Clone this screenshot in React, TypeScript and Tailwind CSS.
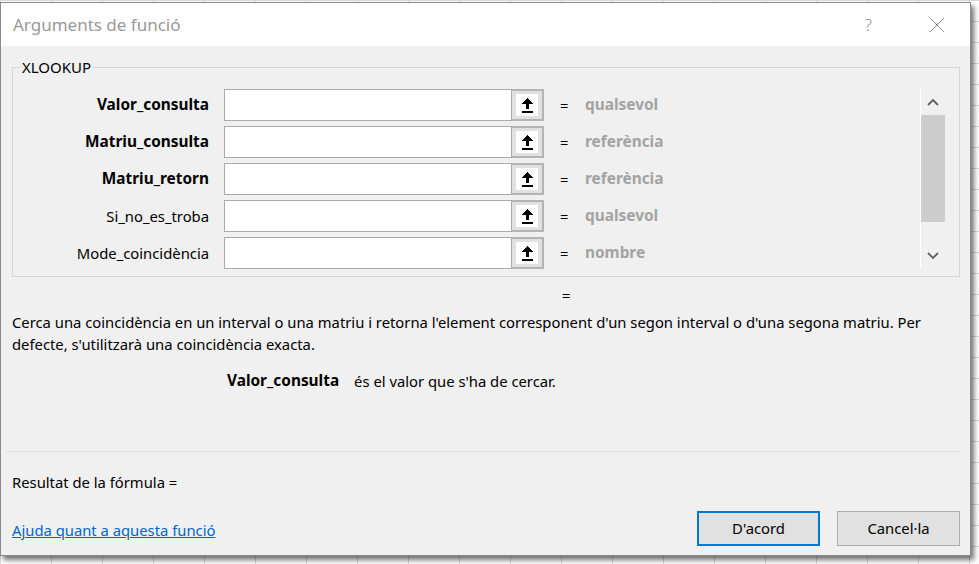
import React from "react";

type Arg = { name: string; bold: boolean; value: string };

const args: Arg[] = [
  { name: "Valor_consulta", bold: true, value: "qualsevol" },
  { name: "Matriu_consulta", bold: true, value: "referència" },
  { name: "Matriu_retorn", bold: true, value: "referència" },
  { name: "Si_no_es_troba", bold: false, value: "qualsevol" },
  { name: "Mode_coincidència", bold: false, value: "nombre" },
];

function RefArrow() {
  return (
    <svg width="11" height="15" viewBox="0 0 11 15" shapeRendering="crispEdges">
      <polygon points="5.5,0 0,6 11,6" fill="#000" />
      <rect x="4" y="6" width="3" height="5" fill="#000" />
      <rect x="0" y="13" width="11" height="1.5" fill="#000" />
    </svg>
  );
}

function Chevron({ up }: { up: boolean }) {
  return (
    <svg width="12" height="8" viewBox="0 0 12 8">
      <polyline
        points={up ? "1,7 6,2 11,7" : "1,1 6,6 11,1"}
        fill="none"
        stroke="#606060"
        strokeWidth="1.8"
      />
    </svg>
  );
}

function ArgRow({ arg }: { arg: Arg }) {
  return (
    <div className="flex h-[32px] items-center">
      <div
        className={`w-[196px] text-right text-black ${arg.bold ? "text-[15.4px] font-bold" : "text-[14.8px]"}`}
      >
        {arg.name}
      </div>
      <div className="ml-[15px] h-[32px] w-[288px] border border-[#ababab] bg-white" />
      <div className="flex h-[32px] w-[32px] items-center justify-center border-2 border-l-0 border-[#b4b4b4] bg-[#e1e1e1]">
        <div className="flex h-[22px] w-[22px] items-center justify-center bg-white">
          <RefArrow />
        </div>
      </div>
      <div className="ml-[16px] w-[9px] text-[14.8px] text-black">=</div>
      <div className="ml-[16px] text-[15.4px] font-bold text-[#a3a3a3]">{arg.value}</div>
    </div>
  );
}

export default function App() {
  return (
    <div
      className="relative h-[564px] w-[979px] overflow-hidden bg-white bg-[linear-gradient(to_right,#d9d9d9_1px,transparent_1px),linear-gradient(to_bottom,#d9d9d9_1px,transparent_1px)] bg-[size:51px_21px]"
      style={{ fontFamily: '"Noto Sans", "Open Sans", sans-serif' }}
    >
      <div className="mt-[2px] flex h-[554px] w-[971px] flex-col border border-[#8a8a8a] bg-[#f0f0f0] shadow-[3px_4px_5px_rgba(0,0,0,0.55)]">
        {/* title bar */}
        <div className="flex h-[43px] items-center bg-white pl-[12px] pr-[25px]">
          <div className="text-[17px] text-[#999999]">Arguments de funció</div>
          <div className="ml-auto text-[17px] font-light text-[#8f8f8f]">?</div>
          <svg className="ml-[57px]" width="16" height="16" viewBox="0 0 16 16">
            <path d="M1,1 L15,15 M15,1 L1,15" stroke="#8a8a8a" strokeWidth="1" fill="none" />
          </svg>
        </div>

        {/* body */}
        <div className="flex flex-1 flex-col">
          <fieldset className="ml-[11px] mt-[11px] w-[948px] border border-[#d5d5d5] px-0 pb-[7px]">
            <legend className="ml-[7px] px-[2px] text-[15px] leading-[20px] text-black">XLOOKUP</legend>
            <div className="flex pt-[12px]">
              <div className="flex w-[907px] flex-col gap-[5px]">
                {args.map((a) => (
                  <ArgRow key={a.name} arg={a} />
                ))}
              </div>
              <div className="flex h-[180px] w-[25px] flex-col items-center border-l border-white">
                <div className="flex h-[26px] w-full items-center justify-center">
                  <Chevron up />
                </div>
                <div className="h-[107px] w-full bg-[#cdcdcd]" />
                <div className="flex flex-1 items-center justify-center pt-[20px]">
                  <Chevron up={false} />
                </div>
              </div>
            </div>
          </fieldset>

          <div className="ml-[561px] mt-[7px] h-[22px] text-[14.8px] leading-[22px] text-black">=</div>

          <div className="ml-[11px] mt-[5px] text-[14.8px] leading-[22px] text-black">
            Cerca una coincidència en un interval o una matriu i retorna l'element corresponent d'un segon interval o d'una segona matriu. Per
            <br />
            defecte, s'utilitzarà una coincidència exacta.
          </div>

          <div className="ml-[226px] mt-[15px] flex h-[22px] items-center leading-[22px] text-black">
            <span className="text-[15.4px] font-bold">Valor_consulta</span>
            <span className="ml-[15px] text-[14.8px]">és el valor que s'ha de cercar.</span>
          </div>

          <div className="ml-[5px] mt-[59px] w-[955px] border-t border-[#dcdcdc]" />

          <div className="ml-[11px] mt-[19px] h-[22px] text-[14.8px] leading-[22px] text-black">
            Resultat de la fórmula =
          </div>

          <div className="mt-[18px] flex items-center pl-[11px] pr-[10px]">
            <a href="#" className="pt-[3px] text-[14.8px] text-[#0066cc] underline">
              Ajuda quant a aquesta funció
            </a>
            <button className="ml-auto flex h-[35px] w-[123px] items-center justify-center border-2 border-[#0078d7] bg-[#e1e1e1] text-[14.8px] text-black">
              D'acord
            </button>
            <button className="ml-[17px] flex h-[35px] w-[123px] items-center justify-center border border-[#adadad] bg-[#e1e1e1] text-[14.8px] text-black">
              Cancel·la
            </button>
          </div>
        </div>
      </div>
    </div>
  );
}
